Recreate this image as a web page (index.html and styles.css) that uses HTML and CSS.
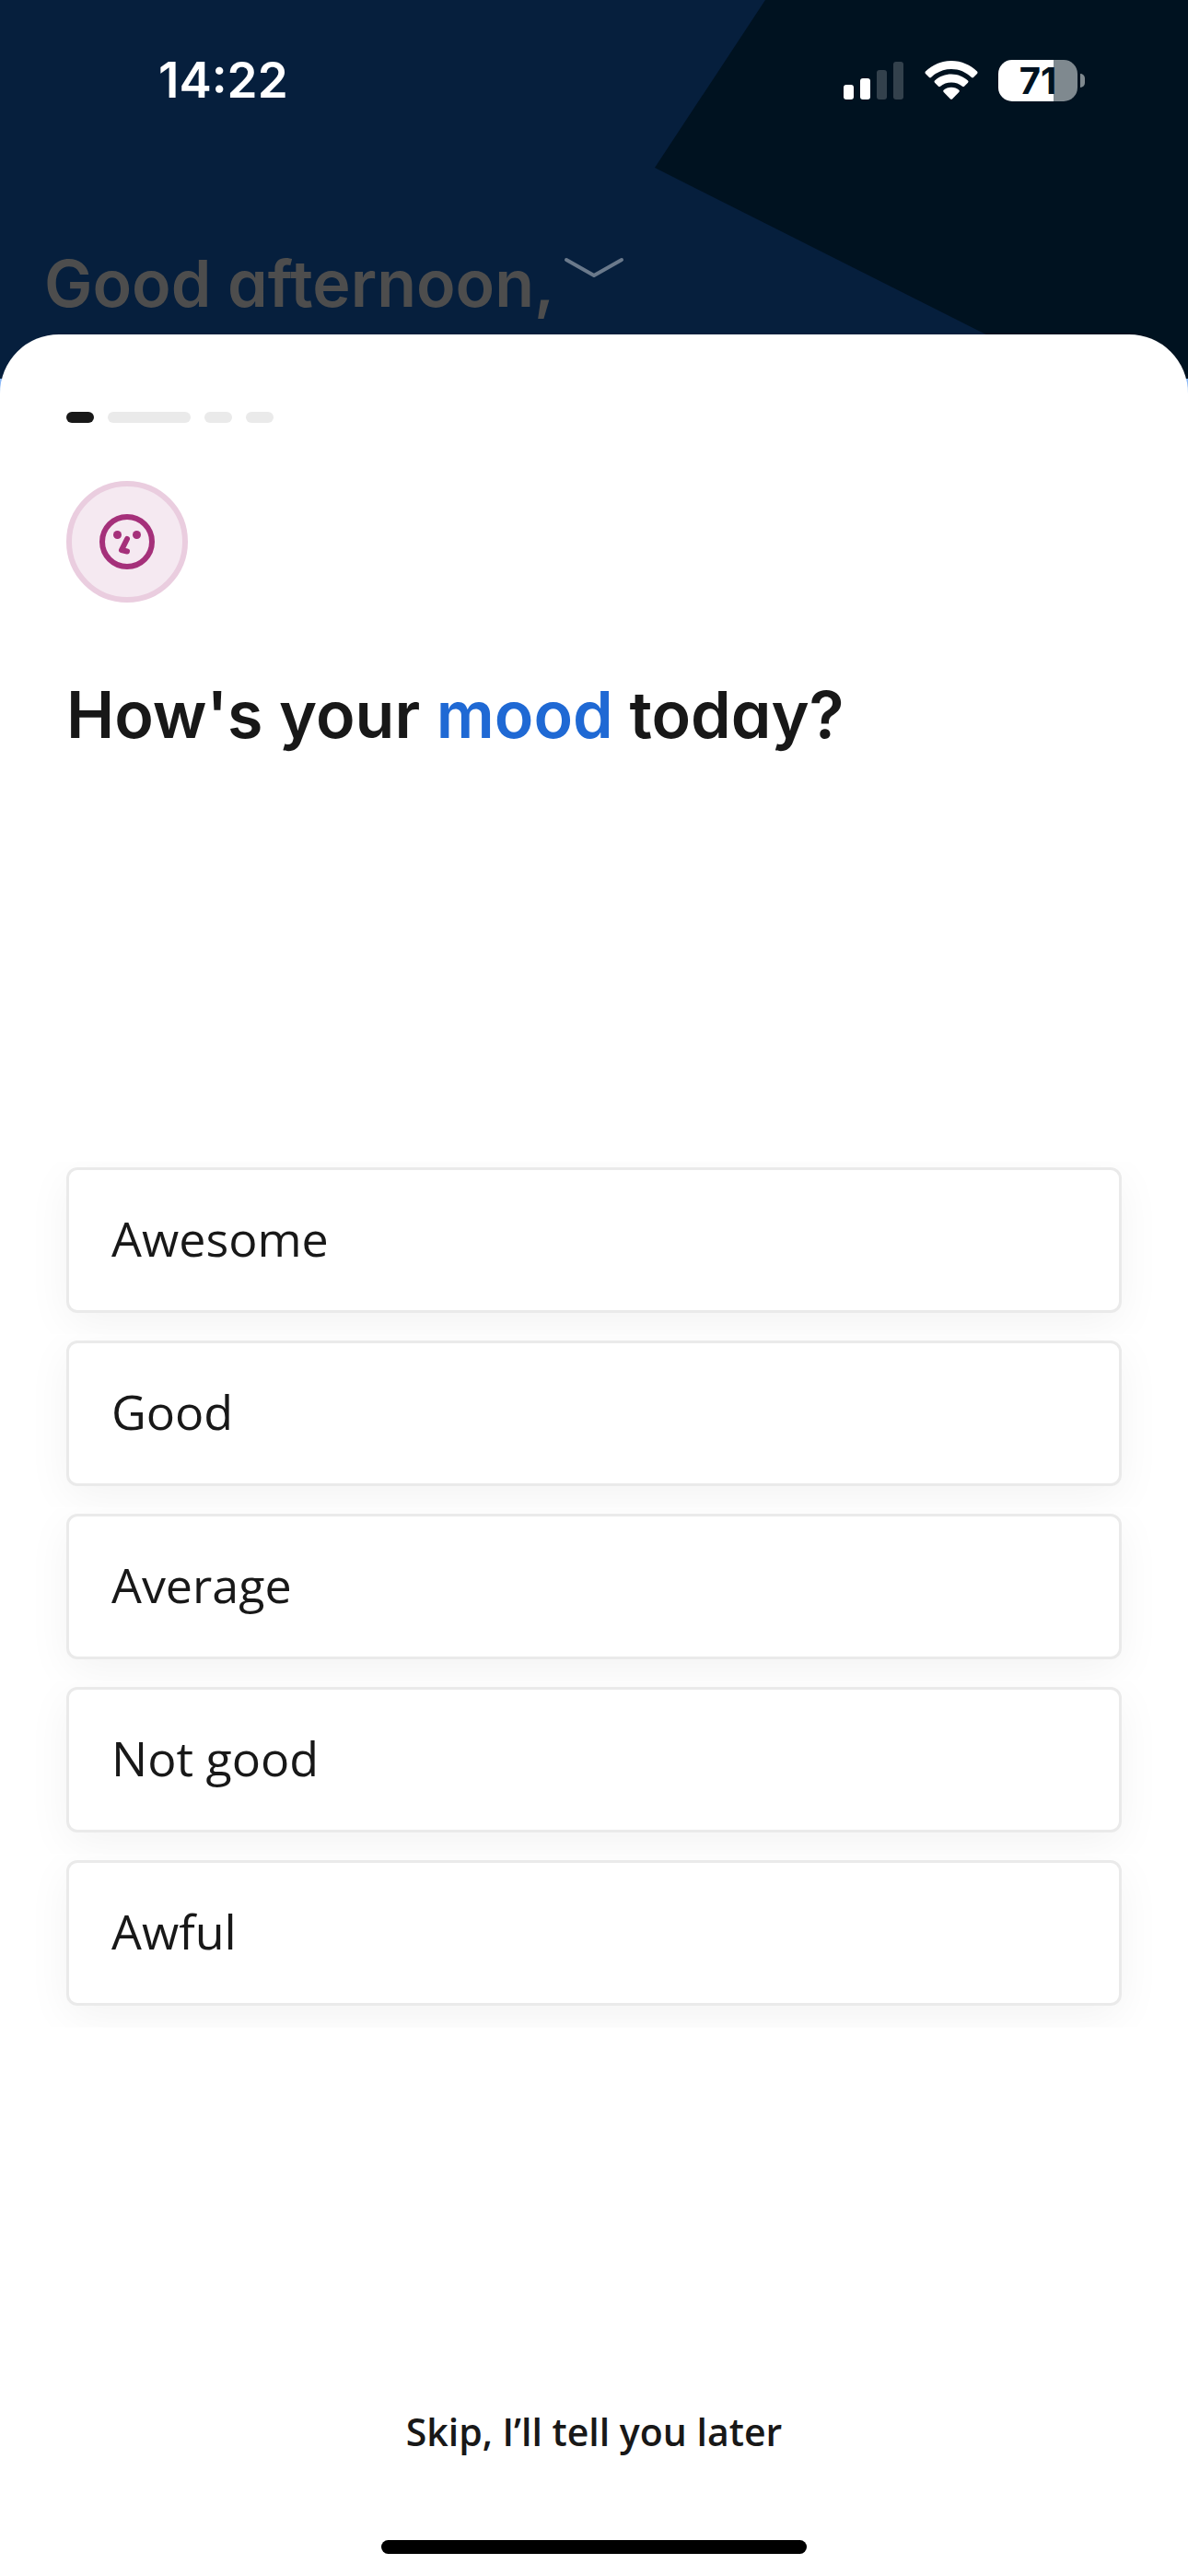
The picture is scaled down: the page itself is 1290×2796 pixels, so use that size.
FILE: index.html
```
<!DOCTYPE html>
<html lang="en">
<head>
    <title>Daily check-in</title>
    <meta charset="UTF-8">
    <meta name="viewport" content="width=device-width, initial-scale=1.0">
    <link rel="stylesheet" href="styles.css">
</head>
<body>
    <svg class="backdrop" viewBox="0 0 1290 411" preserveAspectRatio="xMaxYMin slice" aria-hidden="true">
        <rect width="1290" height="411" fill="#061f3d"/>
        <path d="M831 0H1290V411H1166L711 182Z" fill="#001220"/>
    </svg>

    <header class="header">
        <div class="status-bar">
            <span class="clock">14:22</span>
            <div class="status-icons">
                <svg width="65" height="41" viewBox="0 0 65 41" fill="#fff" aria-hidden="true">
                    <rect x="0" y="25" width="11" height="16" rx="3"/>
                    <rect x="18" y="18" width="11" height="23" rx="3"/>
                    <rect x="36" y="9" width="11" height="32" rx="3" opacity=".2"/>
                    <rect x="54" y="0" width="11" height="41" rx="3" opacity=".2"/>
                </svg>
                <svg class="wifi" width="58" height="42" viewBox="0 0 58 42" fill="#fff" aria-hidden="true">
                    <path d="M29 0C40 0 50 4.500 57 11.500Q58 12.700 57 14L53 18Q52 18.800 51 18C45 12.300 37.500 9 29 9S13 12.300 7 18Q6 18.800 5 18L1 14Q0 12.700 1 11.500C8 4.500 18 0 29 0Z"/>
                    <path d="M29 14.500C36 14.500 42.500 17.300 47 21.500Q48 22.500 47 23.700L43 27.800Q42 28.600 41 27.800C37.800 25 33.500 23.500 29 23.500S20.200 25 17 27.800Q16 28.600 15 27.800L11 23.700Q10 22.500 11 21.500C15.500 17.300 22 14.500 29 14.500Z"/>
                    <path d="M29 28.800C32.300 28.800 35.200 30 37.300 31.800Q38.300 32.800 37.300 34L30 41.400Q29 42.300 28 41.400L20.700 34Q19.700 32.800 20.700 31.800C22.800 30 25.700 28.800 29 28.800Z"/>
                </svg>
                <div class="battery"><span class="battery-level">71</span></div>
            </div>
        </div>
        <p class="greeting">Good afternoon,</p>
        <button class="sheet-handle" aria-label="Close">
            <svg width="66" height="24" viewBox="0 0 66 24" fill="none" stroke="#6a798b" stroke-width="4" stroke-linecap="round" stroke-linejoin="round">
                <path d="M3 3L33 20L63 3"/>
            </svg>
        </button>
    </header>

    <main class="sheet">
        <div class="steps">
            <span class="step active"></span>
            <span class="step long"></span>
            <span class="step"></span>
            <span class="step"></span>
        </div>

        <div class="mood-icon">
            <svg width="60" height="60" viewBox="0 0 60 60" fill="none" stroke="#a5307a" aria-hidden="true">
                <circle cx="30" cy="30" r="27" stroke-width="6"/>
                <circle cx="19.500" cy="22.500" r="4.500" fill="#a5307a" stroke="none"/>
                <circle cx="40.500" cy="22.500" r="4.500" fill="#a5307a" stroke="none"/>
                <path d="M30 27L24 39L30 40.500" stroke-width="6" stroke-linecap="round" stroke-linejoin="round"/>
            </svg>
        </div>

        <h1 class="question">How's your <span class="highlight">mood</span> today?</h1>

        <div class="options">
            <button class="option">Awesome</button>
            <button class="option">Good</button>
            <button class="option">Average</button>
            <button class="option">Not good</button>
            <button class="option">Awful</button>
        </div>

        <button class="skip">Skip, I’ll tell you later</button>
        <div class="home-indicator"></div>
    </main>
</body>
</html>
```
FILE: styles.css
```
* {
    box-sizing: border-box;
    margin: 0;
    padding: 0;
}

body {
    position: relative;
    display: flex;
    flex-direction: column;
    min-height: 100vh;
    background: #8ab7f5;
    color: #181818;
    font-family: 'Open Sans', sans-serif;
}

button {
    border: none;
    background: none;
    color: inherit;
    font-family: inherit;
    cursor: pointer;
}

svg {
    display: block;
}

/* header */
.backdrop {
    position: absolute;
    top: 0;
    left: 0;
    width: 100%;
    height: 411px;
    z-index: -1;
}

.header {
    position: relative;
    padding-bottom: 13px;
}

.status-bar {
    display: flex;
    align-items: center;
    justify-content: space-between;
    height: 174px;
    padding: 0 112px 0 172px;
    color: white;
    font-family: Inter, sans-serif;
}

.clock {
    font-size: 53px;
    font-weight: 600;
}

.status-icons {
    display: flex;
    align-items: center;
}

.wifi {
    margin: 0 22px 0 23px;
}

.battery {
    position: relative;
    width: 86px;
    height: 45px;
    margin-right: 8px;
    border-radius: 15px;
    background: linear-gradient(to right, #fff 60px, #7f898f 60px);
    color: #001220;
    text-align: center;
}

.battery::after {
    content: '';
    position: absolute;
    top: 15px;
    right: -8px;
    width: 5px;
    height: 15px;
    border-radius: 0 5px 5px 0;
    background: #7f898f;
}

.battery-level {
    font-size: 40px;
    font-weight: 700;
    line-height: 45px;
}

.greeting {
    margin: 92px 48px 0;
    color: #4d4d4d;
    font-family: Inter, sans-serif;
    font-size: 70px;
    font-weight: 600;
    font-feature-settings: 'cv11';
    line-height: 84px;
}

.sheet-handle {
    position: absolute;
    left: 50%;
    bottom: 60px;
    transform: translateX(-50%);
}

/* bottom sheet */
.sheet {
    flex: 1;
    display: flex;
    flex-direction: column;
    padding: 84px 72px 24px;
    border-radius: 64px 64px 0 0;
    background: white;
}

.steps {
    display: flex;
    gap: 15px;
}

.step {
    width: 30px;
    height: 12px;
    border-radius: 6px;
    background: #eaeaea;
}

.step.long {
    width: 90px;
}

.step.active {
    background: #181818;
}

.mood-icon {
    display: flex;
    align-items: center;
    justify-content: center;
    width: 132px;
    height: 132px;
    margin-top: 63px;
    border: 6px solid #eacddf;
    border-radius: 50%;
    background: #f5e9f1;
}

.question {
    margin-top: 80px;
    font-family: Inter, sans-serif;
    font-size: 70px;
    font-weight: 600;
    font-feature-settings: 'cv11';
    line-height: 84px;
}

.highlight {
    color: #1f69d4;
}

.options {
    flex: 1;
    display: flex;
    flex-direction: column;
    justify-content: center;
    gap: 30px;
    padding-top: 16px;
}

.option {
    height: 158px;
    padding: 0 46px 4px;
    border: 3px solid #eaeaea;
    border-radius: 12px;
    background: white;
    box-shadow: 0 12px 48px rgba(0,0,0,0.05);
    /* keep each shadow off the next card */
    clip-path: inset(-6px -60px -24px);
    font-size: 52px;
    text-align: left;
}

.skip {
    align-self: center;
    font-size: 41px;
    font-weight: 600;
    line-height: 60px;
}

.home-indicator {
    align-self: center;
    width: 462px;
    height: 15px;
    margin-top: 88px;
    border-radius: 8px;
    background: black;
}
```
